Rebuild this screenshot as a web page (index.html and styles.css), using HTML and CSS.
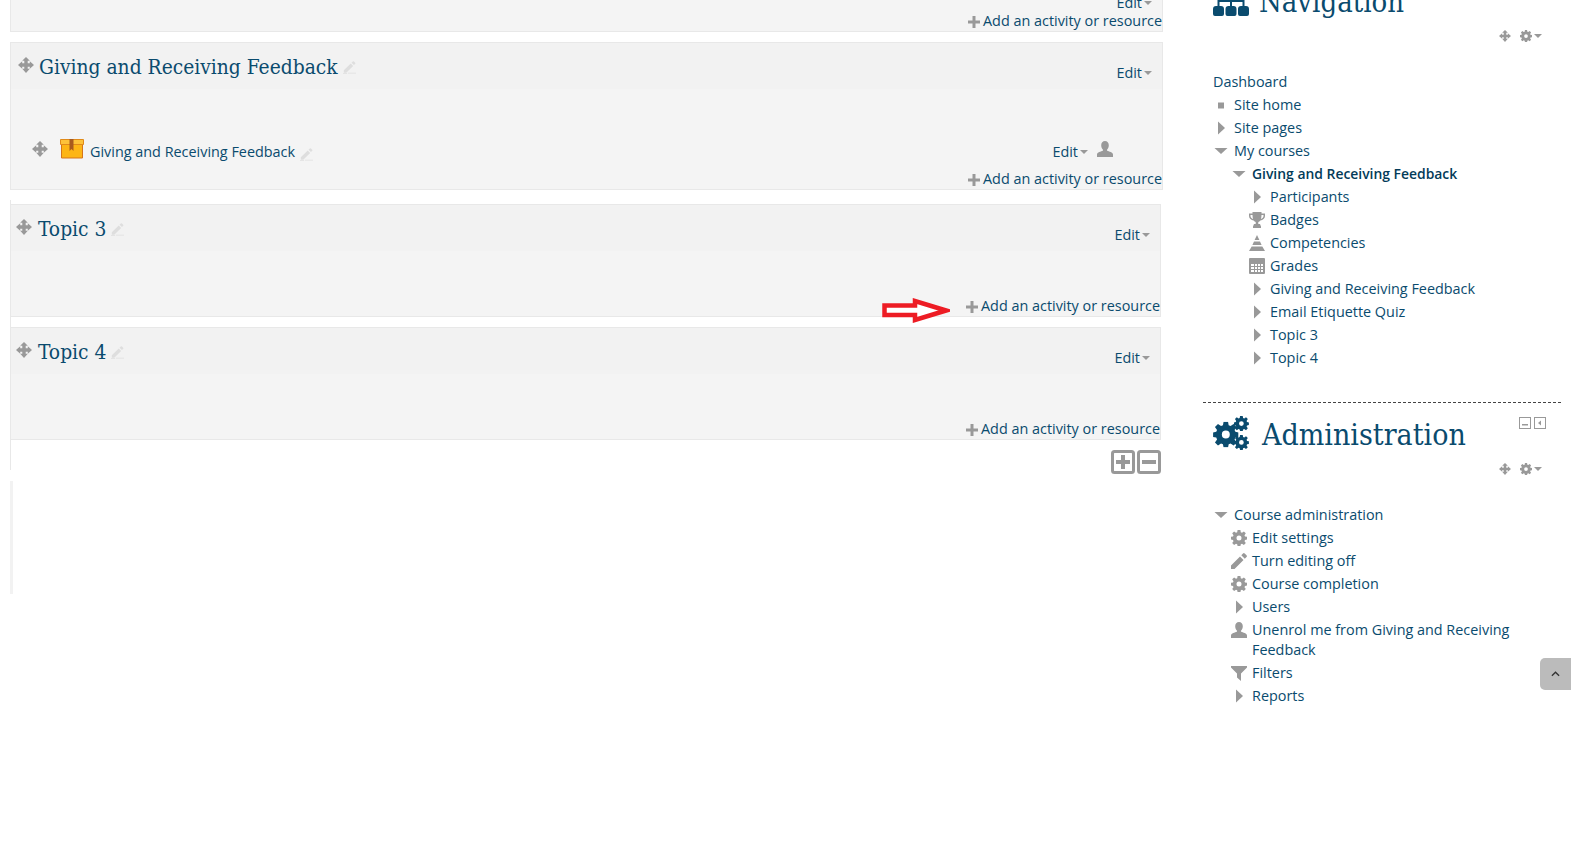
FILE: index.html
```html
<!DOCTYPE html>
<html lang="en">
<head>
  <meta charset="UTF-8">
  <title>Giving and Receiving Feedback</title>
  <link rel="stylesheet" href="styles.css">
</head>
<body>

  <!-- Icon set -->
  <svg class="icon-defs" xmlns="http://www.w3.org/2000/svg">
    <symbol id="i-move" viewBox="0 0 16 16"><path d="M8 0l3.800 3.800H9.700v2.500h2.100V4.200L16 8l-4.200 3.800V9.700H9.700v2.100h2.100L8 16l-3.800-4.200h2.100V9.700H4.200v2.100L0 8l4.200-3.800v2.100h2.100V3.800H4.200z"/></symbol>
    <symbol id="i-pencil" viewBox="0 0 16 16"><path d="M1 11.500L9.500 3l3 3L4 14.500H1zM10.500 2l1.500-1.500a1 1 0 0 1 1.400 0l1.600 1.600a1 1 0 0 1 0 1.400L13.500 5zM6 14.500h10v1H6zM0 15h5v1H0z"/></symbol>
    <symbol id="i-edit" viewBox="0 0 16 16"><path d="M0 12.500L9 3.500l3.500 3.500L3.500 16H0zM10.300 2.200l1.700-1.700a1.200 1.200 0 0 1 1.700 0l1.800 1.800a1.200 1.200 0 0 1 0 1.700l-1.700 1.700z"/></symbol>
    <symbol id="i-plus" viewBox="0 0 12 12"><path d="M4.500 0h3v4.500H12v3H7.500V12h-3V7.500H0v-3h4.500z"/></symbol>
    <symbol id="i-caret" viewBox="0 0 8 4"><path d="M0 0h8L4 4z"/></symbol>
    <symbol id="i-right" viewBox="0 0 16 16"><path d="M5 1.500l7 6.500-7 6.500z"/></symbol>
    <symbol id="i-down" viewBox="0 0 16 16"><path d="M1.500 5h13L8 11z"/></symbol>
    <symbol id="i-dot" viewBox="0 0 16 16"><path d="M5 5.500h6v6H5z"/></symbol>
    <symbol id="i-user" viewBox="0 0 16 16"><path d="M8 0c2.300 0 3.800 1.800 3.800 4.300 0 1.700-.7 3.300-1.700 4.200v1.300c1.800.8 5.900 1.600 5.900 3.700V16H0v-2.500c0-2.100 4.100-2.900 5.900-3.700V8.500C4.900 7.600 4.200 6 4.200 4.300 4.200 1.800 5.700 0 8 0z"/></symbol>
    <symbol id="i-gear" viewBox="0 0 16 16"><path fill-rule="evenodd" d="M6.600 0h2.800l.4 2.200 1.200.5L12.900 1.400l1.900 1.900-1.300 1.900.5 1.200 2 .4v2.800l-2 .4-.5 1.200 1.300 1.900-1.900 1.900-1.900-1.300-1.200.5-.4 2H6.600l-.4-2-1.200-.5-1.900 1.300-1.900-1.900 1.300-1.900-.5-1.200-2-.4V6.800l2-.4.5-1.200-1.300-1.900 1.900-1.900L5 2.700l1.200-.5zM8 5.500a2.500 2.500 0 1 0 0 5 2.500 2.500 0 0 0 0-5z"/></symbol>
    <symbol id="i-trophy" viewBox="0 0 16 16"><path fill-rule="evenodd" d="M3.500 0h9v1.500H16V4c0 2.500-2.200 4.300-4.600 4.600-.6.800-1.400 1.300-2.100 1.500V12h1.700l1 2.500H4l1-2.500h1.700v-1.900c-.7-.2-1.500-.7-2.100-1.500C2.200 8.300 0 6.500 0 4V1.500h3.500zM1.500 3v1c0 1.400 1 2.500 2.600 3-.4-1-.6-2.500-.6-4zm13 0h-2c0 1.500-.2 3-.6 4 1.600-.5 2.600-1.600 2.600-3zM4 14.500h8V16H4z"/></symbol>
    <symbol id="i-pyramid" viewBox="0 0 16 16"><path d="M8 0l2.400 5H5.600zM5 6.500h6l1.600 3.500H3.400zM2.700 11.500h10.600L16 16H0z"/></symbol>
    <symbol id="i-table" viewBox="0 0 16 16"><path fill-rule="evenodd" d="M1 0h14a1 1 0 0 1 1 1v14a1 1 0 0 1-1 1H1a1 1 0 0 1-1-1V1a1 1 0 0 1 1-1zM2 6v2h3V6zM6 6v2h2V6zM9 6v2h2V6zM12 6v2h2V6zM2 9v2h3V9zM6 9v2h2V9zM9 9v2h2V9zM12 9v2h2V9zM2 12v2h3v-2zM6 12v2h2v-2zM9 12v2h2v-2zM12 12v2h2v-2z"/></symbol>
    <symbol id="i-filter" viewBox="0 0 16 16"><path d="M0 1h16v1.500L10 8.500V16l-4-3.500v-4L0 2.500z"/></symbol>
    <symbol id="i-sitemap" viewBox="0 0 36 28"><path d="M3 18h5a3 3 0 0 1 3 3v5a2 2 0 0 1-2 2H2a2 2 0 0 1-2-2v-5a3 3 0 0 1 3-3zM15.500 18h5a3 3 0 0 1 3 3v5a2 2 0 0 1-2 2h-7a2 2 0 0 1-2-2v-5a3 3 0 0 1 3-3zM28 18h5a3 3 0 0 1 3 3v5a2 2 0 0 1-2 2h-7a2 2 0 0 1-2-2v-5a3 3 0 0 1 3-3zM4.500 12h27v6h-2v-4H19v4h-2v-4H6.500v4h-2zM13 0h10v12H13z"/></symbol>
    <symbol id="i-gears" viewBox="0 0 38 36">
      <use href="#i-gear" x="0" y="6" width="27" height="27"/>
      <use href="#i-gear" x="22" y="0" width="16" height="16"/>
      <use href="#i-gear" x="22" y="20" width="16" height="16"/>
    </symbol>
  </svg>

  <div class="page">

    <div class="course">

      <div class="section section-clipped">
        <div class="sec-head">
          <a class="edit edit-clipped">Edit<svg class="caret"><use href="#i-caret"/></svg></a>
        </div>
        <div class="add-row">
          <svg class="add-plus"><use href="#i-plus"/></svg><a>Add an activity or resource</a>
        </div>
      </div>

      <div class="section">
        <div class="sec-head">
          <svg class="handle"><use href="#i-move"/></svg>
          <h3 class="sec-title">Giving and Receiving Feedback</h3>
          <svg class="pencil"><use href="#i-pencil"/></svg>
          <a class="edit">Edit<svg class="caret"><use href="#i-caret"/></svg></a>
        </div>
        <div class="sec-body sec-body-filled">
          <div class="module">
            <svg class="handle"><use href="#i-move"/></svg>
            <svg class="book" viewBox="0 0 24 20">
              <path d="M1.500 5h21v14h-21z" fill="#fdb515" stroke="#d5751a"/>
              <path d="M.5.500h23v5H.5z" fill="#fdc23a" stroke="#e08a1a"/>
              <path d="M9.500 0h4v12l-2-2-2 2z" fill="#a85a1e"/>
            </svg>
            <a class="module-name">Giving and Receiving Feedback</a>
            <svg class="pencil pencil-module"><use href="#i-pencil"/></svg>
            <a class="edit edit-module">Edit<svg class="caret"><use href="#i-caret"/></svg></a>
            <svg class="person"><use href="#i-user"/></svg>
          </div>
        </div>
        <div class="add-row">
          <svg class="add-plus"><use href="#i-plus"/></svg><a>Add an activity or resource</a>
        </div>
      </div>

      <div class="lower">
        <div class="section">
          <div class="sec-head">
            <svg class="handle"><use href="#i-move"/></svg>
            <h3 class="sec-title">Topic 3</h3>
            <svg class="pencil"><use href="#i-pencil"/></svg>
            <a class="edit">Edit<svg class="caret"><use href="#i-caret"/></svg></a>
          </div>
          <div class="sec-body"></div>
          <div class="add-row">
            <svg class="add-plus"><use href="#i-plus"/></svg><a>Add an activity or resource</a>
          </div>
          <!-- Red arrow drawn over the screenshot -->
          <svg class="red-arrow" viewBox="0 0 68 25">
            <path d="M2.500 7.500H33V3L64 12.500 33 22v-5H2.500z" fill="#fff" stroke="#ed1c24" stroke-width="4.500"/>
          </svg>
        </div>

        <div class="section">
          <div class="sec-head">
            <svg class="handle"><use href="#i-move"/></svg>
            <h3 class="sec-title">Topic 4</h3>
            <svg class="pencil"><use href="#i-pencil"/></svg>
            <a class="edit">Edit<svg class="caret"><use href="#i-caret"/></svg></a>
          </div>
          <div class="sec-body"></div>
          <div class="add-row">
            <svg class="add-plus"><use href="#i-plus"/></svg><a>Add an activity or resource</a>
          </div>
        </div>

        <div class="collapse-row">
          <svg class="square-btn" viewBox="0 0 24 24">
            <rect x="1.500" y="1.500" width="21" height="21" rx="2"/>
            <path class="square-mark" d="M10 5h4v5h5v4h-5v5h-4v-5H5v-4h5z"/>
          </svg>
          <svg class="square-btn" viewBox="0 0 24 24">
            <rect x="1.500" y="1.500" width="21" height="21" rx="2"/>
            <path class="square-mark" d="M5 10h14v4H5z"/>
          </svg>
        </div>
      </div>

      <div class="footer-sliver"></div>
    </div>

    <div class="side">

      <div class="block block-nav">
        <div class="block-head">
          <svg class="block-icon"><use href="#i-sitemap"/></svg>
          <h2 class="block-title">Navigation</h2>
        </div>
        <div class="block-tools">
          <svg class="tool"><use href="#i-move"/></svg>
          <svg class="tool"><use href="#i-gear"/></svg>
          <svg class="caret"><use href="#i-caret"/></svg>
        </div>
        <ul class="tree">
          <li class="row row-plain"><a>Dashboard</a></li>
          <li class="row"><svg class="ti"><use href="#i-dot"/></svg><a>Site home</a></li>
          <li class="row"><svg class="ti"><use href="#i-right"/></svg><a>Site pages</a></li>
          <li class="row"><svg class="ti"><use href="#i-down"/></svg><a>My courses</a></li>
          <li>
            <ul class="tree tree-sub">
              <li class="row"><svg class="ti"><use href="#i-down"/></svg><a class="current">Giving and Receiving Feedback</a></li>
              <li>
                <ul class="tree tree-sub">
                  <li class="row"><svg class="ti"><use href="#i-right"/></svg><a>Participants</a></li>
                  <li class="row"><svg class="ti"><use href="#i-trophy"/></svg><a>Badges</a></li>
                  <li class="row"><svg class="ti"><use href="#i-pyramid"/></svg><a>Competencies</a></li>
                  <li class="row"><svg class="ti"><use href="#i-table"/></svg><a>Grades</a></li>
                  <li class="row"><svg class="ti"><use href="#i-right"/></svg><a>Giving and Receiving Feedback</a></li>
                  <li class="row"><svg class="ti"><use href="#i-right"/></svg><a>Email Etiquette Quiz</a></li>
                  <li class="row"><svg class="ti"><use href="#i-right"/></svg><a>Topic 3</a></li>
                  <li class="row"><svg class="ti"><use href="#i-right"/></svg><a>Topic 4</a></li>
                </ul>
              </li>
            </ul>
          </li>
        </ul>
      </div>

      <div class="block block-admin">
        <div class="block-head">
          <svg class="block-icon"><use href="#i-gears"/></svg>
          <h2 class="block-title">Administration</h2>
          <div class="dock">
            <svg class="dock-btn" viewBox="0 0 12 12"><rect x=".5" y=".5" width="11" height="11"/><path class="dock-mark" d="M3 7h6v1.500H3z"/></svg>
            <svg class="dock-btn" viewBox="0 0 12 12"><rect x=".5" y=".5" width="11" height="11"/><path class="dock-mark" d="M7 3.500v5L4 6z"/></svg>
          </div>
        </div>
        <div class="block-tools">
          <svg class="tool"><use href="#i-move"/></svg>
          <svg class="tool"><use href="#i-gear"/></svg>
          <svg class="caret"><use href="#i-caret"/></svg>
        </div>
        <ul class="tree">
          <li class="row"><svg class="ti"><use href="#i-down"/></svg><a>Course administration</a></li>
          <li>
            <ul class="tree tree-sub">
              <li class="row"><svg class="ti"><use href="#i-gear"/></svg><a>Edit settings</a></li>
              <li class="row"><svg class="ti"><use href="#i-edit"/></svg><a>Turn editing off</a></li>
              <li class="row"><svg class="ti"><use href="#i-gear"/></svg><a>Course completion</a></li>
              <li class="row"><svg class="ti"><use href="#i-right"/></svg><a>Users</a></li>
              <li class="row"><svg class="ti"><use href="#i-user"/></svg><a>Unenrol me from Giving and Receiving Feedback</a></li>
              <li class="row"><svg class="ti"><use href="#i-filter"/></svg><a>Filters</a></li>
              <li class="row"><svg class="ti"><use href="#i-right"/></svg><a>Reports</a></li>
            </ul>
          </li>
        </ul>
      </div>

    </div>
  </div>

  <a class="to-top"><svg viewBox="0 0 10 6"><path d="M1 5l4-4 4 4" fill="none" stroke="#333" stroke-width="1.500"/></svg></a>

</body>
</html>
```

FILE: styles.css
```css
html, body {
  height: 100%;
  overflow: hidden;
}

body {
  margin: 0;
  background: #fff;
  font-family: "Open Sans", Arial, sans-serif;
  font-size: 14.4px;
  line-height: 20px;
  color: #0a4b6e;
}

svg {
  fill: #999;
  flex: none;
}

ul {
  list-style: none;
  margin: 0;
  padding: 0;
}

.icon-defs {
  position: absolute;
  width: 0;
  height: 0;
}

.page {
  display: flex;
  gap: 40px;
  margin-top: -20px;
  padding-left: 10px;
}

.course {
  width: 1153px;
  flex: none;
}

.side {
  width: 358px;
  flex: none;
}

/* Course sections */

.section {
  position: relative;
  background: #f4f4f4;
  border: 1px solid #e8e8e8;
  margin-bottom: 10px;
}

.section-clipped {
  height: 52px;
  box-sizing: border-box;
}

.section-clipped .sec-head {
  height: 30px;
  background: none;
}

.sec-head {
  display: flex;
  align-items: flex-start;
  height: 46px;
  padding: 14px 10px 0 7px;
  box-sizing: border-box;
  background: #f2f2f2;
}

.handle {
  width: 16px;
  height: 16px;
}

.sec-title {
  margin: -2px 0 0 5px;
  font-family: "DejaVu Serif Condensed", "DejaVu Serif", serif;
  font-size: 20.8px;
  font-weight: normal;
  line-height: 24px;
  color: #0a4b6e;
}

.pencil {
  width: 13px;
  height: 13px;
  margin: 4px 0 0 5px;
  fill: #dedede;
}

.pencil-module {
  margin-top: 4px;
}

.edit {
  display: flex;
  align-items: center;
  margin: 6px 0 0 auto;
}

.edit-clipped {
  margin-top: -2px;
}

.caret {
  width: 8px;
  height: 4px;
  margin-left: 2px;
}

.sec-body {
  height: 45px;
}

.sec-body-filled {
  height: 80px;
  box-sizing: border-box;
  padding: 53px 49px 0 21px;
}

.module {
  display: flex;
  align-items: center;
  height: 20px;
}

.module .handle {
  margin-top: -6px;
}

.book {
  width: 24px;
  height: 20px;
  margin: -6px 0 0 12px;
}

.module-name {
  margin-left: 6px;
}

.edit-module {
  margin: 0 0 0 auto;
}

.person {
  width: 16px;
  height: 16px;
  margin: -6px 0 0 9px;
}

.add-row {
  display: flex;
  align-items: center;
  justify-content: flex-end;
  height: 20px;
}

.add-plus {
  width: 12px;
  height: 12px;
  margin: 2px 3px 0 0;
}

.lower {
  width: 1151px;
  height: 270px;
  box-sizing: border-box;
  margin-top: 10px;
  padding-top: 4px;
  border-left: 1px solid #e8e8e8;
}

.lower .section {
  border-left: 0;
}

.lower .sec-head {
  padding-left: 5px;
}

.lower .sec-title {
  margin-left: 6px;
}

.red-arrow {
  position: absolute;
  left: 871px;
  top: 93px;
  width: 68px;
  height: 25px;
}

.collapse-row {
  display: flex;
  justify-content: flex-end;
  gap: 2px;
  height: 20px;
}

.square-btn {
  width: 24px;
  height: 24px;
  fill: #fff;
  stroke: #999;
  stroke-width: 3;
}

.square-mark {
  fill: #999;
  stroke: none;
}

.footer-sliver {
  width: 3px;
  height: 113px;
  margin-top: 11px;
  background: #f2f2f2;
}

/* Side blocks */

.block-head {
  position: relative;
  display: flex;
  align-items: center;
  gap: 13px;
  padding-left: 10px;
  height: 40px;
}

.block-nav {
  border-bottom: 1px dashed #444;
  height: 423px;
  box-sizing: border-box;
}

.block-nav .block-head {
  gap: 10px;
}

.block-nav .block-title {
  font-size: 29px;
}

.block-admin {
  padding-top: 10px;
}

.block-icon {
  width: 36px;
  height: 34px;
  margin-top: 0;
  fill: #0a4b6e;
}

.block-nav .block-icon {
  margin-top: 4px;
}

.block-title {
  margin: 4px 0 0;
  font-family: "DejaVu Serif Condensed", "DejaVu Serif", serif;
  font-size: 30px;
  font-weight: normal;
  line-height: 34px;
  color: #0a4b6e;
}

.dock {
  position: absolute;
  top: 4px;
  right: 15px;
  display: flex;
  gap: 3px;
}

.dock-btn {
  width: 12px;
  height: 12px;
  fill: #fff;
  stroke: #999;
}

.dock-mark {
  fill: #999;
  stroke: none;
}

.block-tools {
  display: flex;
  align-items: center;
  justify-content: flex-end;
  height: 16px;
  margin-top: 8px;
  padding-right: 19px;
}

.tool {
  width: 12px;
  height: 12px;
  margin-left: 9px;
}

.tree {
  padding: 0 0 0 10px;
}

.block-tools + .tree {
  margin-top: 26px;
}

.tree-sub {
  padding-left: 18px;
}

.row {
  display: flex;
  gap: 5px;
  padding: 1.5px 0;
  align-items: flex-start;
}

.ti {
  width: 16px;
  height: 16px;
  margin-top: 2px;
}

.current {
  font-size: 13.9px;
  font-weight: 600;
  color: #033b59;
}

.to-top {
  position: fixed;
  right: 0;
  top: 658px;
  display: flex;
  align-items: center;
  justify-content: center;
  width: 31px;
  height: 32px;
  background: #bbb;
  border-radius: 5px 0 0 5px;
}

.to-top svg {
  width: 9px;
  height: 6px;
}
```
